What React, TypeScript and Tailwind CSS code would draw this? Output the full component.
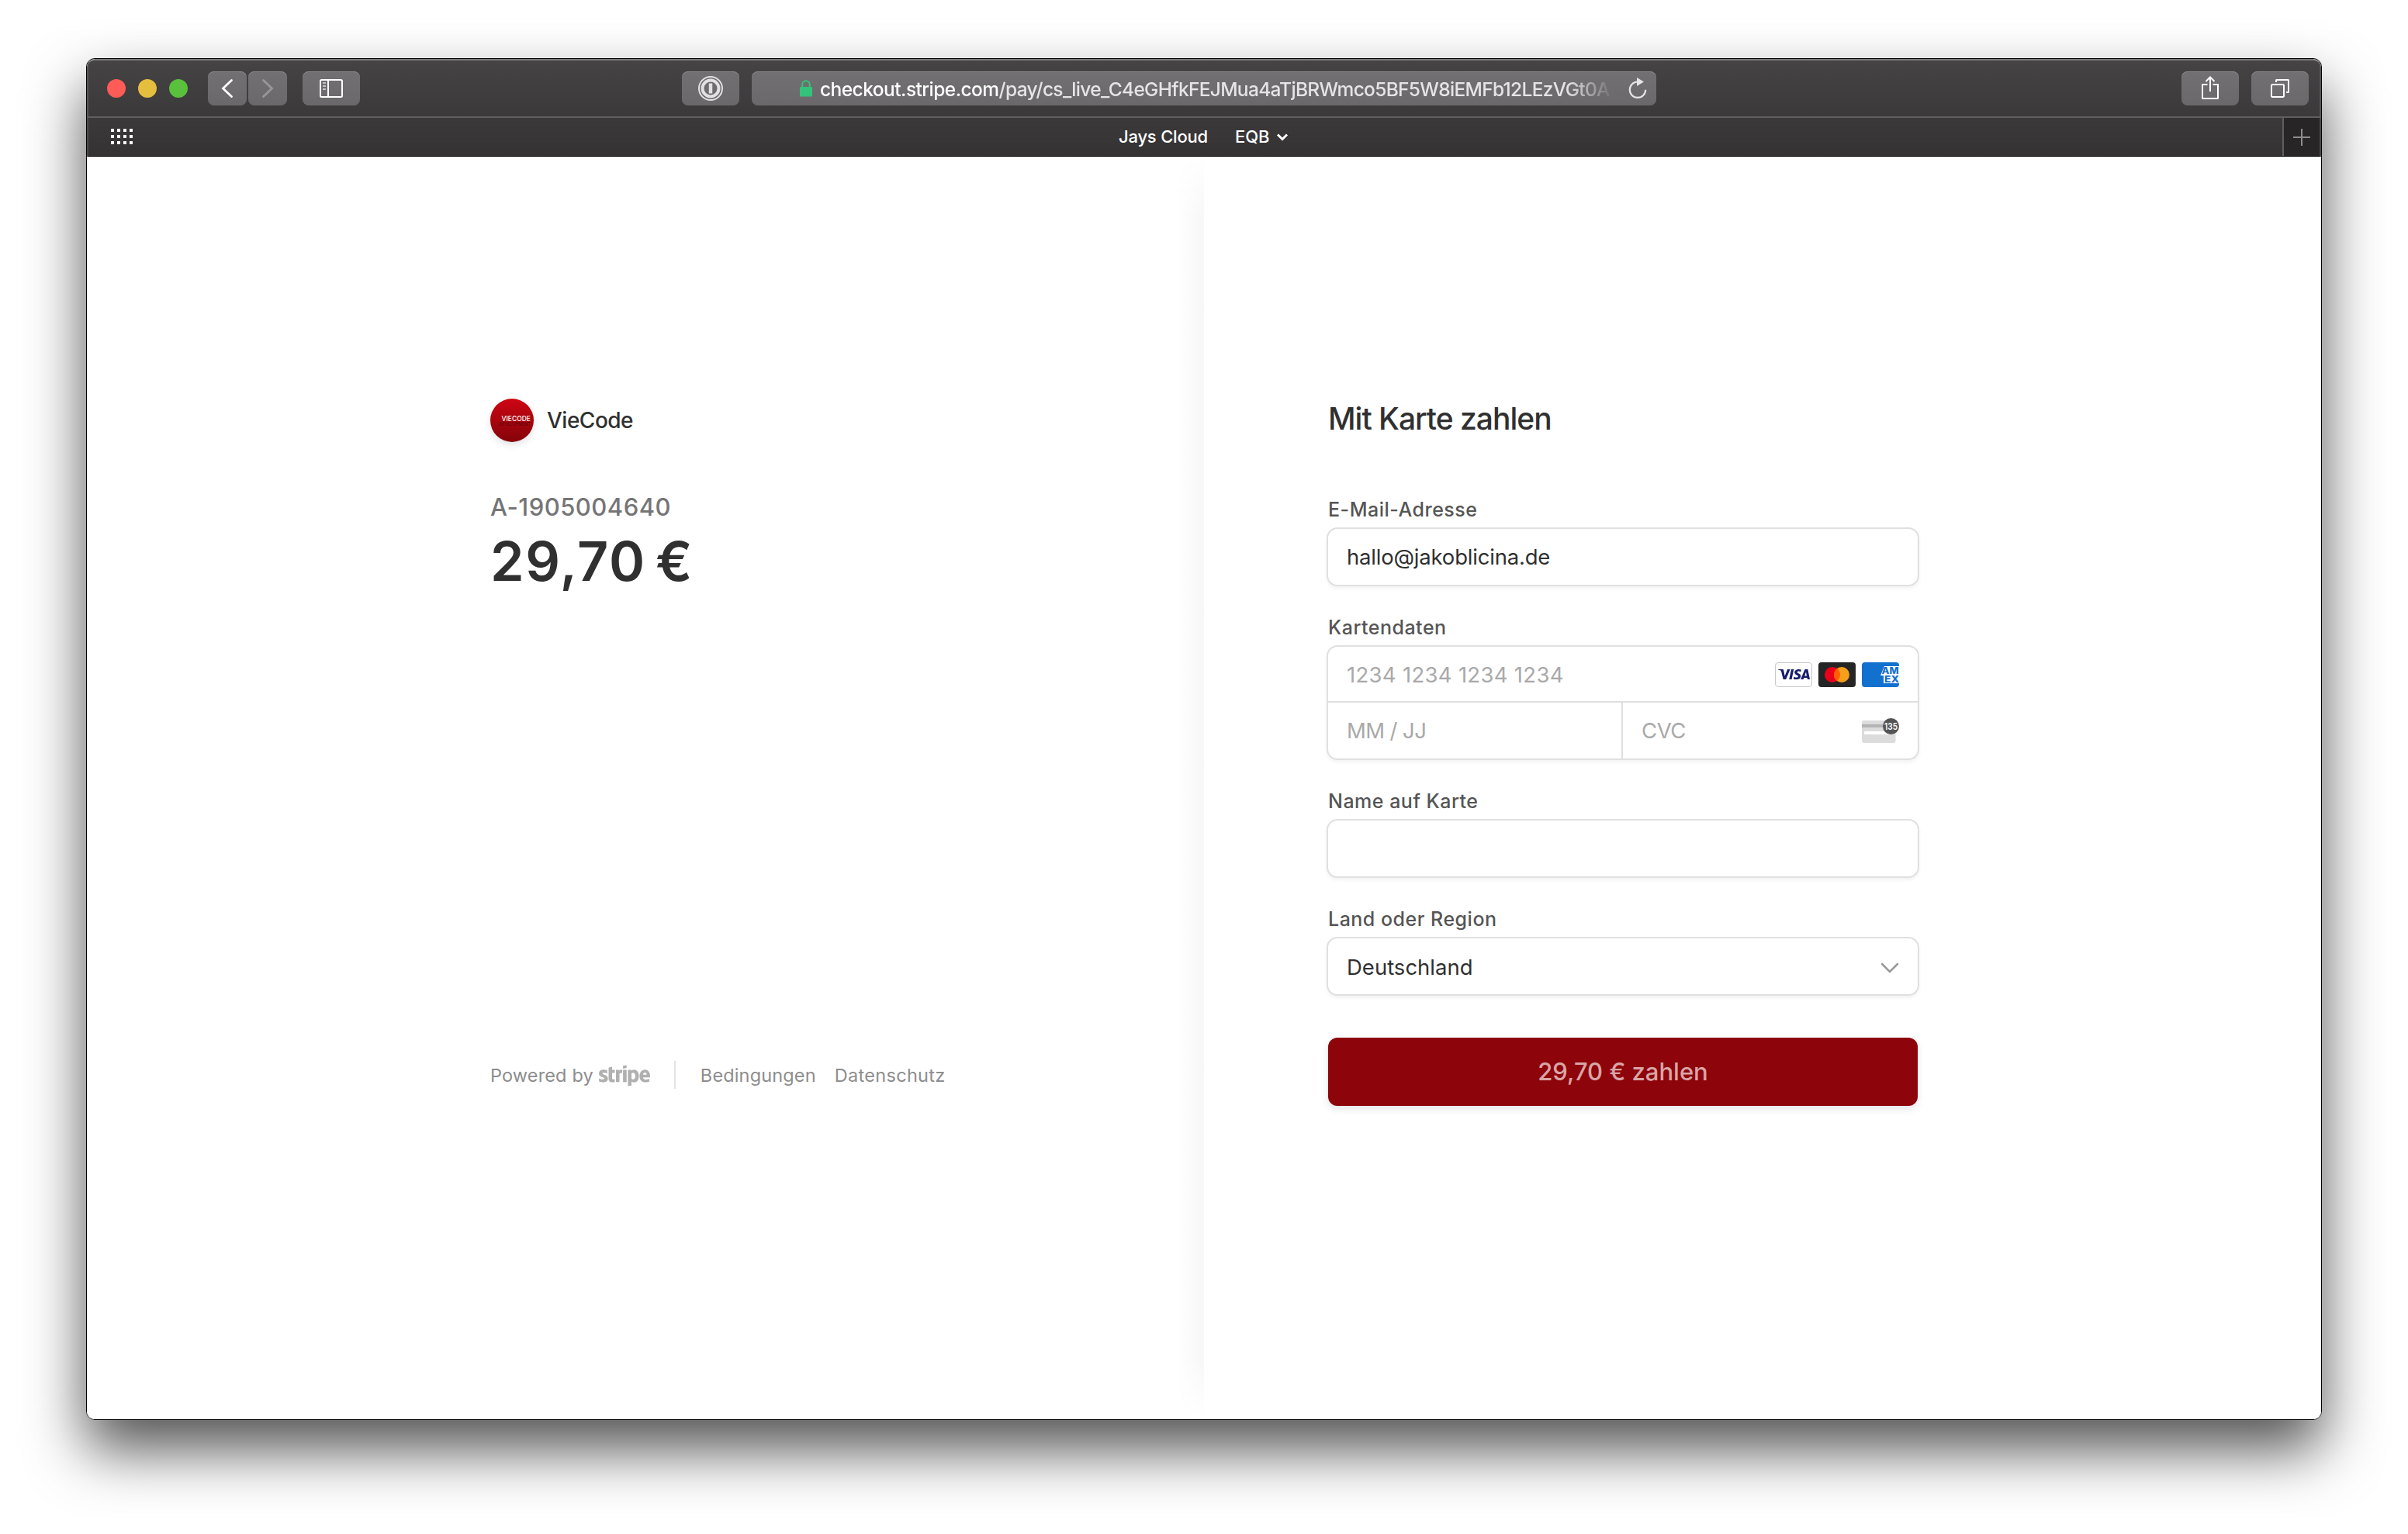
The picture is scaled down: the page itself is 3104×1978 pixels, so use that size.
import { FaStripe } from "react-icons/fa";
import { SiVisa } from "react-icons/si";

const toolButton =
  "flex h-[44px] items-center justify-center rounded-[8px] bg-linear-to-b from-[#727072] to-[#6a686a] shadow-[inset_0_1px_0_#8a888a]";

const Toolbar = () => {
  return (
    <div className="flex h-[76px] items-center rounded-t-[10px] border-2 border-x-[#585658] border-t-[#7a787a] border-b-[#605e60] bg-linear-to-b from-[#454344] to-[#3b393a] pr-[14px] pl-[24px]">
      <div className="flex gap-4">
        <span className="size-[24px] rounded-full bg-[#ff5b57]" />
        <span className="size-[24px] rounded-full bg-[#e6be3e]" />
        <span className="size-[24px] rounded-full bg-[#59c13b]" />
      </div>
      <div className="ml-[26px] flex gap-[2px]">
        <button className={`${toolButton} w-[50px]`}>
          <svg width="50" height="44" fill="none" stroke="#fff" strokeWidth="2.8" strokeLinecap="round">
            <path d="M30.5 11.5L19.5 22l11 10.5" />
          </svg>
        </button>
        <button className={`${toolButton} w-[50px]`}>
          <svg width="50" height="44" fill="none" stroke="#989698" strokeWidth="2.8" strokeLinecap="round">
            <path d="M19.5 11.5l11 10.5-11 10.5" />
          </svg>
        </button>
      </div>
      <button className={`${toolButton} ml-[20px] w-[74px]`}>
        <svg width="74" height="44" fill="none" stroke="#fff" strokeWidth="2">
          <rect x="23" y="11" width="28" height="22" rx="1.5" />
          <path d="M33 11v22" />
          <path d="M26 15h4M26 19h4M26 23h4" stroke="#c4c2c4" />
        </svg>
      </button>
      <button className={`${toolButton} ml-[415px] w-[74px]`}>
        <svg width="74" height="44" fill="none" stroke="#e2e0e2">
          <circle cx="37" cy="22" r="15" strokeWidth="2" />
          <circle cx="37" cy="22" r="10.5" strokeWidth="4" />
          <path d="M37 15.5v13" strokeWidth="4.5" />
        </svg>
      </button>
      <div className="ml-4 flex h-[44px] w-[1166px] items-center rounded-[8px] bg-linear-to-b from-[#727072] to-[#6a686a] pr-[12px] pl-[62px] shadow-[inset_0_1px_0_#8a888a]">
        <svg width="16" height="22" viewBox="0 0 16 22" fill="none">
          <path d="M3.2 10V6a4.8 4.8 0 0 1 9.6 0v4" stroke="#35c27a" strokeWidth="2" />
          <rect y="9" width="16" height="12.5" rx="1" fill="#35c27a" />
        </svg>
        <div className="ml-[10px] w-[1024px] mask-r-from-94% pt-[2px] text-[24.5px] leading-[42px] font-[450] tracking-[-0.68px] whitespace-nowrap text-[#e6e4e6]">
          <span className="font-medium tracking-[-0.55px] text-white">checkout.stripe.com</span>
          /pay/cs_live_C4eGHfkFEJMua4aTjBRWmco5BF5W8iEMFb12LEzVGt0A
        </div>
        <svg className="ml-auto" width="24" height="28" viewBox="0 0 24 28" fill="none">
          <path d="M12 5.5A10.2 10.2 0 1 0 22.2 15.7" stroke="#e6e4e6" strokeWidth="2.2" />
          <path d="M11 0l9 5.5-9 5.5z" fill="#e6e4e6" />
        </svg>
      </div>
      <button className={`${toolButton} ml-auto w-[74px]`}>
        <svg width="74" height="44" fill="none" stroke="#fff" strokeWidth="2">
          <path d="M33.5 17H27v17.5a.5.5 0 0 0 .5.5h19a.5.5 0 0 0 .5-.5V17h-6.5" />
          <path d="M37 26V8M31.5 13L37 7.5l5.5 5.5" />
        </svg>
      </button>
      <button className={`${toolButton} ml-4 w-[74px]`}>
        <svg width="74" height="44" fill="none" stroke="#fff" strokeWidth="2">
          <rect x="26" y="17" width="16" height="16" rx="1.5" />
          <path d="M32 14v-2.5a.5.5 0 0 1 .5-.5H47.5a.5.5 0 0 1 .5.5V26.5a.5.5 0 0 1-.5.5H45" />
        </svg>
      </button>
    </div>
  );
};

const BookmarkBar = () => {
  return (
    <div className="flex h-[50px] border-x-2 border-b border-x-[#4c4a4c] border-b-black bg-linear-to-b from-[#3b393a] to-[#343233] text-[22px] font-[450] text-white">
      <svg className="mt-[14px] ml-[29px]" width="28" height="20" fill="#fff">
        {[0, 8, 16].map((y) =>
          [0, 8, 16, 24].map((x) => <rect key={`${x}-${y}`} x={x} y={y} width="4" height="4" />)
        )}
      </svg>
      <div className="ml-[1271px] flex items-center">
        <span className="w-[150px] tracking-[-0.2px]">Jays Cloud</span>
        <span className="tracking-[-0.1px]">EQB</span>
        <svg className="ml-[9px]" width="16" height="12" fill="none" stroke="#fff" strokeWidth="3">
          <path d="M2 2.5l6 6 6-6" />
        </svg>
      </div>
      <div className="ml-auto flex w-[48px] items-center justify-center border-l-2 border-[#605e60] bg-[#272526]">
        <svg width="22" height="22" stroke="#8e8c8e" strokeWidth="2">
          <path d="M11 0v22M0 11h22" />
        </svg>
      </div>
    </div>
  );
};

const Summary = () => {
  return (
    <section className="flex w-[1404px] flex-col pt-[312px] pl-[520px]">
      <div className="flex items-center">
        <div className="flex size-[56px] flex-col items-end justify-center rounded-full bg-linear-to-b from-[#cf0613] to-[#840309] pt-[2px] pr-[4px] shadow-[0_4px_10px_rgba(60,66,87,0.14)]">
          <span className="text-[8.5px] leading-[7px] font-medium text-white">VIECODE</span>
          <span className="text-[5.5px] leading-[6px] text-[#5f0208]">DEVELOPMENT</span>
        </div>
        <span className="ml-[17px] text-[28px] font-[450] tracking-[-0.5px] text-[#303030]">VieCode</span>
      </div>
      <div className="mt-[64px] text-[31px] leading-[40px] font-[450] tracking-[0.5px] text-[#757575]">
        A-1905004640
      </div>
      <div className="mt-[8px] text-[70px] leading-[84px] font-semibold tracking-[1.6px] text-[#303030] [word-spacing:-7px]">
        29,70 €
      </div>
      <footer className="mt-[602px] flex h-[36px] items-center text-[23.5px] tracking-[0.15px] text-[#8d8d8d]">
        <span className="pt-[2px]">Powered by</span>
        <FaStripe className="mt-[2px] ml-[7px] h-[56px] w-[66px] text-[#b0b0b0]" />
        <span className="ml-[31px] h-[36px] w-[2px] bg-[#e3e3e3]" />
        <span className="ml-[32px] pt-[2px]">Bedingungen</span>
        <span className="ml-[24px] pt-[2px] tracking-[0.3px]">Datenschutz</span>
      </footer>
    </section>
  );
};

const Field = ({ label, children }) => {
  return (
    <label className="flex flex-col">
      <span className="h-[40px] pl-[2px] text-[25px] leading-[34px] font-[450] tracking-[0.5px] text-[#555]">
        {label}
      </span>
      {children}
    </label>
  );
};

const inputBox =
  "flex h-[76px] items-center rounded-[14px] border-2 border-[#e0e0e0] bg-white pl-[24px] text-[27.5px] text-[#303030] shadow-[0_3px_4px_rgba(0,0,0,0.05)]";

const CardBrands = () => {
  return (
    <div className="flex gap-2">
      <div className="flex h-[32px] w-[48px] items-center justify-center rounded-[4px] border border-[#c8c8c8] bg-white">
        <SiVisa className="size-[41px] text-[#171e6c]" />
      </div>
      <svg width="48" height="32" viewBox="0 0 48 32">
        <rect width="48" height="32" rx="4" fill="#252525" />
        <circle cx="18" cy="16" r="10" fill="#eb001b" />
        <circle cx="30" cy="16" r="10" fill="#f79e1b" />
        <path d="M24 8a10 10 0 0 1 0 16 10 10 0 0 1 0-16z" fill="#ff5f00" />
      </svg>
      <svg width="48" height="32" viewBox="0 0 48 32">
        <rect width="48" height="32" rx="4" fill="#1270ce" />
        <path d="M29 5h19v22H28V17h-4z" fill="#fff" />
        <g className="font-['Inter']" fill="#1270ce" fontSize="12" fontWeight="800">
          <text x="25.5" y="15.2" textLength="22" lengthAdjust="spacingAndGlyphs">AM</text>
          <text x="29" y="25.8" textLength="19" lengthAdjust="spacingAndGlyphs">EX</text>
        </g>
      </svg>
    </div>
  );
};

const PaymentForm = () => {
  return (
    <section className="flex flex-1 flex-col pt-[312px] pl-[158px]">
      <div className="flex w-[764px] flex-col">
        <h1 className="pl-[2px] text-[39px] leading-[52px] font-[450] tracking-[-1px] text-[#303030]">
          Mit Karte zahlen
        </h1>
        <div className="mt-[74px] flex flex-col gap-[36px]">
          <Field label="E-Mail-Adresse">
            <div className={`${inputBox} pt-[2px] tracking-[-0.2px]`}>hallo@jakoblicina.de</div>
          </Field>
          <Field label="Kartendaten">
            <div className="flex h-[148px] flex-col rounded-[14px] border-2 border-[#e0e0e0] bg-white text-[27.5px] text-[#a9a9a9] shadow-[0_3px_4px_rgba(0,0,0,0.05)]">
              <div className="flex h-[72px] items-center justify-between border-b-2 border-[#e0e0e0] pt-px pr-[24px] pl-[24px]">
                <span className="pt-[2px] tracking-[0.3px]">1234 1234 1234 1234</span>
                <CardBrands />
              </div>
              <div className="flex h-[72px]">
                <div className="flex w-[380px] items-center border-r-2 border-[#e0e0e0] pt-[2px] pl-[24px] tracking-[-0.6px]">
                  MM / JJ
                </div>
                <div className="flex flex-1 items-center justify-between pr-[24px] pl-[24px]">
                  <span className="pt-[2px] tracking-[-0.4px]">CVC</span>
                  <svg width="48" height="32" viewBox="0 0 48 32">
                    <rect y="3" width="43.5" height="29" rx="3" fill="#dcdcdc" />
                    <path d="M0 8h32v4H0z" fill="#b4b4b4" />
                    <rect x="3" y="17" width="32" height="4" rx="1" fill="#fff" />
                    <circle cx="37.5" cy="10.5" r="10.5" fill="#555" />
                    <text
                      className="font-['Inter']"
                      x="37.5"
                      y="14.5"
                      textAnchor="middle"
                      textLength="17"
                      lengthAdjust="spacingAndGlyphs"
                      fontSize="11.5"
                      fontWeight="600"
                      fill="#fff"
                    >
                      135
                    </text>
                  </svg>
                </div>
              </div>
            </div>
          </Field>
          <Field label="Name auf Karte">
            <div className={inputBox} />
          </Field>
          <Field label="Land oder Region">
            <div className={`${inputBox} justify-between pt-[4px] pr-[24px]`}>
              Deutschland
              <svg width="24" height="14" fill="none" stroke="#999" strokeWidth="2.5" strokeLinecap="round">
                <path d="M2 2l10 10L22 2" />
              </svg>
            </div>
          </Field>
        </div>
        <button className="mt-[54px] ml-[2px] h-[88px] w-[760px] rounded-[12px] bg-[#8d040a] text-[31px] font-[450] text-[#d9a5a7] shadow-[0_4px_10px_rgba(60,66,87,0.14)]">
          29,70 € zahlen
        </button>
      </div>
    </section>
  );
};

const App = () => {
  return (
    <div className="h-[1978px] w-[3104px] overflow-hidden bg-white pt-[75px] pl-[111px] font-['Inter',sans-serif]">
      <div className="w-[2882px] rounded-[11px] shadow-[0_38px_76px_rgba(0,0,0,0.68)]">
        <div className="h-[1756px] overflow-hidden rounded-[11px] border border-black bg-white">
          <Toolbar />
          <BookmarkBar />
          <main className="flex h-[1628px] bg-white">
            <Summary />
            {/* soft edge between the two halves */}
            <div className="w-[36px] bg-linear-to-r from-white to-[#f7f7f7] mask-t-from-95% mask-b-from-95%" />
            <PaymentForm />
          </main>
        </div>
      </div>
    </div>
  );
};

export default App;
